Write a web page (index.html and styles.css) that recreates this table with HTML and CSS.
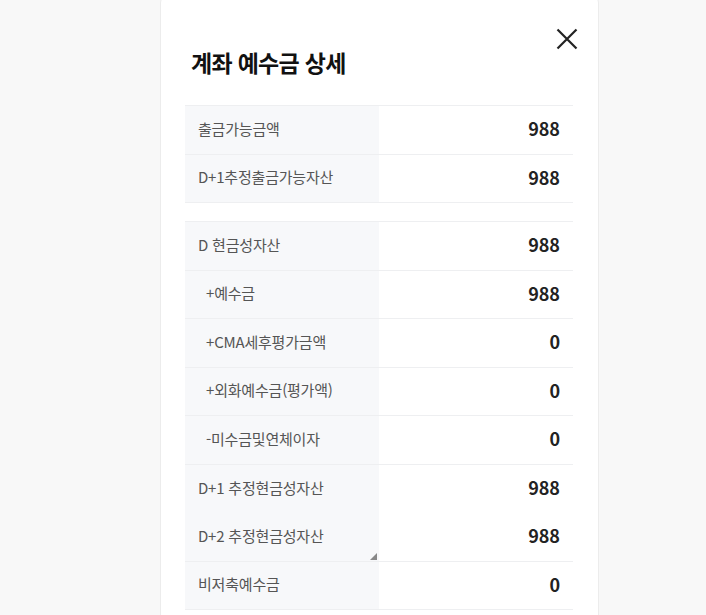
FILE: index.html
```html
<!DOCTYPE html>
<html lang="ko">
<head>
<meta charset="utf-8">
<link rel="stylesheet" href="styles.css">
</head>
<body>
<div class="modal">
  <button class="close" aria-label="닫기">
    <svg width="22" height="22" viewBox="0 0 22 22"><path d="M1.5 1.5 L20.5 20.5 M20.5 1.5 L1.5 20.5" stroke="#222" stroke-width="2.2" fill="none"/></svg>
  </button>
  <h1 class="title">계좌 예수금 상세</h1>
  <div class="table">
    <div class="row"><div class="label">출금가능금액</div><div class="value">988</div></div>
    <div class="row"><div class="label">D+1추정출금가능자산</div><div class="value">988</div></div>
  </div>
  <div class="table second">
    <div class="row"><div class="label">D 현금성자산</div><div class="value">988</div></div>
    <div class="row"><div class="label indent">+예수금</div><div class="value">988</div></div>
    <div class="row"><div class="label indent">+CMA세후평가금액</div><div class="value">0</div></div>
    <div class="row"><div class="label indent">+외화예수금(평가액)</div><div class="value">0</div></div>
    <div class="row"><div class="label indent">-미수금및연체이자</div><div class="value">0</div></div>
    <div class="row noline"><div class="label">D+1 추정현금성자산</div><div class="value">988</div></div>
    <div class="row"><div class="label handle">D+2 추정현금성자산</div><div class="value">988</div></div>
    <div class="row"><div class="label">비저축예수금</div><div class="value">0</div></div>
  </div>
</div>
</body>
</html>
```
FILE: styles.css
```css
html, body {
  margin: 0;
  padding: 0;
  background: #f8f8f8;
  height: 100%;
  overflow: hidden;
}
body {
  font-family: "Noto Sans CJK KR", "Noto Sans", sans-serif;
}
.modal {
  position: relative;
  margin-left: 161px;
  margin-top: -12px;
  width: 437px;
  box-sizing: border-box;
  padding: 12px 25px 0 24px;
  background: #fff;
  border-radius: 16px 16px 0 0;
  box-shadow: 0 0 0 1px #ececec;
  min-height: 700px;
}
.close {
  position: absolute;
  top: 40px;
  right: 20px;
  width: 22px;
  height: 22px;
  padding: 0;
  border: 0;
  background: none;
  display: flex;
}
.title {
  margin: 47px 0 0 6px;
  font-size: 23px;
  line-height: 30px;
  font-weight: 700;
  color: #111;
  letter-spacing: -0.7px;
}
.table {
  margin-top: 28px;
  border-top: 1px solid #eeeff1;
}
.table.second {
  margin-top: 18px;
}
.row {
  display: flex;
  height: 48.5px;
  box-sizing: border-box;
  border-bottom: 1px solid #eeeff1;
}
.row.noline {
  border-bottom: none;
}
.label {
  position: relative;
  width: 194px;
  flex: none;
  background: #f7f8fa;
  display: flex;
  align-items: center;
  padding-left: 13px;
  padding-bottom: 3px;
  box-sizing: border-box;
  font-size: 15px;
  color: #555;
  letter-spacing: -0.2px;
}
.label.indent {
  padding-left: 21px;
}
.label.handle::after {
  content: "";
  position: absolute;
  right: 2px;
  bottom: 1px;
  width: 0;
  height: 0;
  border-left: 7px solid transparent;
  border-bottom: 7px solid #888;
}
.value {
  flex: 1;
  display: flex;
  align-items: center;
  justify-content: flex-end;
  padding-right: 13px;
  padding-bottom: 3px;
  font-size: 18px;
  font-weight: 700;
  color: #222;
}
```
